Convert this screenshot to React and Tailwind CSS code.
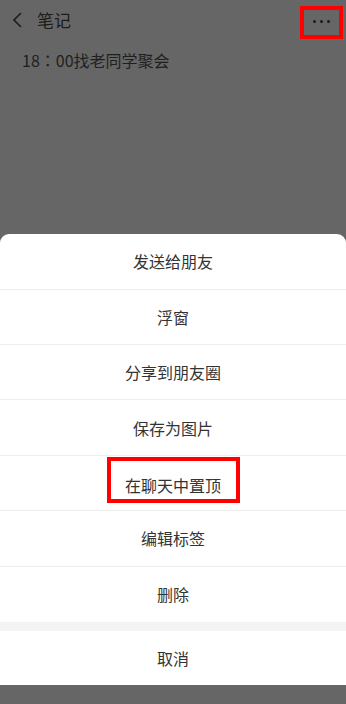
const ITEMS = ['发送给朋友', '浮窗', '分享到朋友圈', '保存为图片', '在聊天中置顶', '编辑标签', '删除'];

const FONT = { fontFamily: '"Noto Sans CJK SC", "Noto Sans", sans-serif' };

export default function App() {
  return (
    <div className="relative w-[346px] h-[704px] overflow-hidden bg-[#666666] flex flex-col" style={FONT}>
      {/* header (dimmed by overlay) */}
      <div className="h-[40px] flex items-center pl-[11px] pr-[3px]">
        <svg width="14" height="18" viewBox="0 0 14 18" className="mr-[12px]">
          <path d="M10 2 L3 9 L10 16" fill="none" stroke="#1c1c1c" strokeWidth="1.6" />
        </svg>
        <span className="text-[17px] text-[#1c1c1c]">笔记</span>
        <div className="ml-auto w-[43px] h-[33px] border-[4px] border-[#ff0000] flex items-center justify-center gap-[4px] mt-[5px] pb-[3px]">
          <span className="w-[3px] h-[3px] rounded-full bg-[#1c1c1c]" />
          <span className="w-[3px] h-[3px] rounded-full bg-[#1c1c1c]" />
          <span className="w-[3px] h-[3px] rounded-full bg-[#1c1c1c]" />
        </div>
      </div>
      <div className="pl-[22px] pt-[9px] text-[16px] text-[#1f1f1f] leading-[22px]">
        18<span style={{ fontFamily: '"Noto Sans CJK TC", sans-serif' }}>：</span>00找老同学聚会
      </div>

      {/* action sheet */}
      <div className="mt-auto mb-[19px] bg-white rounded-t-[9px] overflow-hidden">
        {ITEMS.map((t, i) => (
          <div
            key={t}
            className={`h-[55.4px] flex items-center justify-center text-[16px] text-[#333333] ${i < ITEMS.length - 1 ? 'border-b border-[#ededed]' : ''}`}
          >
            {t === '在聊天中置顶' ? (
              <span className="border-[4px] border-[#ff0000] w-[133px] h-[46px] mb-[6px] pt-[10px] flex items-center justify-center">{t}</span>
            ) : (
              t
            )}
          </div>
        ))}
        <div className="h-[9px] bg-[#f4f4f4]" />
        <div className="h-[54px] flex items-center justify-center text-[16px] text-[#333333]">取消</div>
      </div>
    </div>
  );
}
